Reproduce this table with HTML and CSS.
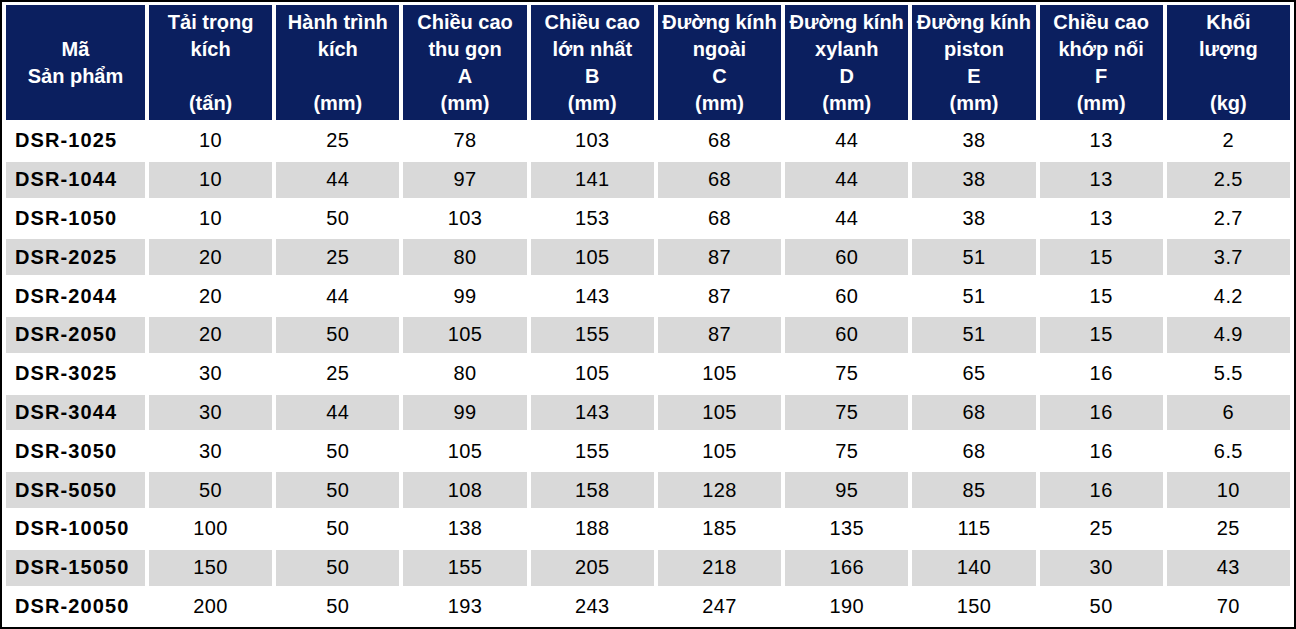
FILE: index.html
```html
<!DOCTYPE html>
<html lang="vi">
<head>
<meta charset="utf-8">
<title>Bảng thông số kích DSR</title>
<link rel="stylesheet" href="styles.css">
</head>
<body>
<div class="frame">
<table class="spec">
  <colgroup>
    <col class="c-code">
    <col class="c-val"><col class="c-val"><col class="c-val"><col class="c-val"><col class="c-val">
    <col class="c-val"><col class="c-val"><col class="c-val"><col class="c-val">
  </colgroup>
  <thead>
    <tr>
      <th>Mã<br>Sản phẩm</th>
      <th>Tải trọng<br>kích<br>&nbsp;<br>(tấn)</th>
      <th>Hành trình<br>kích<br>&nbsp;<br>(mm)</th>
      <th>Chiều cao<br>thu gọn<br>A<br>(mm)</th>
      <th>Chiều cao<br>lớn nhất<br>B<br>(mm)</th>
      <th>Đường kính<br>ngoài<br>C<br>(mm)</th>
      <th>Đường kính<br>xylanh<br>D<br>(mm)</th>
      <th>Đường kính<br>piston<br>E<br>(mm)</th>
      <th>Chiều cao<br>khớp nối<br>F<br>(mm)</th>
      <th>Khối<br>lượng<br>&nbsp;<br>(kg)</th>
    </tr>
  </thead>
  <tbody>
    <tr><td>DSR-1025</td><td>10</td><td>25</td><td>78</td><td>103</td><td>68</td><td>44</td><td>38</td><td>13</td><td>2</td></tr>
    <tr class="alt"><td>DSR-1044</td><td>10</td><td>44</td><td>97</td><td>141</td><td>68</td><td>44</td><td>38</td><td>13</td><td>2.5</td></tr>
    <tr><td>DSR-1050</td><td>10</td><td>50</td><td>103</td><td>153</td><td>68</td><td>44</td><td>38</td><td>13</td><td>2.7</td></tr>
    <tr class="alt"><td>DSR-2025</td><td>20</td><td>25</td><td>80</td><td>105</td><td>87</td><td>60</td><td>51</td><td>15</td><td>3.7</td></tr>
    <tr><td>DSR-2044</td><td>20</td><td>44</td><td>99</td><td>143</td><td>87</td><td>60</td><td>51</td><td>15</td><td>4.2</td></tr>
    <tr class="alt"><td>DSR-2050</td><td>20</td><td>50</td><td>105</td><td>155</td><td>87</td><td>60</td><td>51</td><td>15</td><td>4.9</td></tr>
    <tr><td>DSR-3025</td><td>30</td><td>25</td><td>80</td><td>105</td><td>105</td><td>75</td><td>65</td><td>16</td><td>5.5</td></tr>
    <tr class="alt"><td>DSR-3044</td><td>30</td><td>44</td><td>99</td><td>143</td><td>105</td><td>75</td><td>68</td><td>16</td><td>6</td></tr>
    <tr><td>DSR-3050</td><td>30</td><td>50</td><td>105</td><td>155</td><td>105</td><td>75</td><td>68</td><td>16</td><td>6.5</td></tr>
    <tr class="alt"><td>DSR-5050</td><td>50</td><td>50</td><td>108</td><td>158</td><td>128</td><td>95</td><td>85</td><td>16</td><td>10</td></tr>
    <tr><td>DSR-10050</td><td>100</td><td>50</td><td>138</td><td>188</td><td>185</td><td>135</td><td>115</td><td>25</td><td>25</td></tr>
    <tr class="alt"><td>DSR-15050</td><td>150</td><td>50</td><td>155</td><td>205</td><td>218</td><td>166</td><td>140</td><td>30</td><td>43</td></tr>
    <tr><td>DSR-20050</td><td>200</td><td>50</td><td>193</td><td>243</td><td>247</td><td>190</td><td>150</td><td>50</td><td>70</td></tr>
  </tbody>
</table>
</div>
</body>
</html>
```
FILE: styles.css
```css
html, body {
  margin: 0;
  padding: 0;
  background: #ffffff;
}

.frame {
  box-sizing: border-box;
  width: 1296px;
  height: 629px;
  border: 2px solid #000000;
  background: #ffffff;
  overflow: hidden;
}

.spec {
  width: 100%;
  border-collapse: separate;
  border-spacing: 4px 3px;
  table-layout: fixed;
  font-family: "Liberation Sans", Arial, sans-serif;
  color: #000000;
}

.c-code { width: 139px; }
.c-val { width: auto; }

.spec th {
  background: #0b1f5f;
  color: #ffffff;
  font-weight: bold;
  font-size: 20px;
  line-height: 27px;
  height: 115px;
  padding: 0;
  text-align: center;
  vertical-align: middle;
  white-space: nowrap;
  box-sizing: border-box;
}

.spec td {
  font-size: 20px;
  height: 35.8px;
  padding: 0;
  text-align: center;
  vertical-align: middle;
  letter-spacing: 0.4px;
  white-space: nowrap;
  box-sizing: border-box;
}

.spec td:first-child {
  text-align: left;
  font-weight: bold;
  padding-left: 9px;
  letter-spacing: 1.1px;
}

.spec tr.alt td {
  background: #d9d9d9;
}
```
